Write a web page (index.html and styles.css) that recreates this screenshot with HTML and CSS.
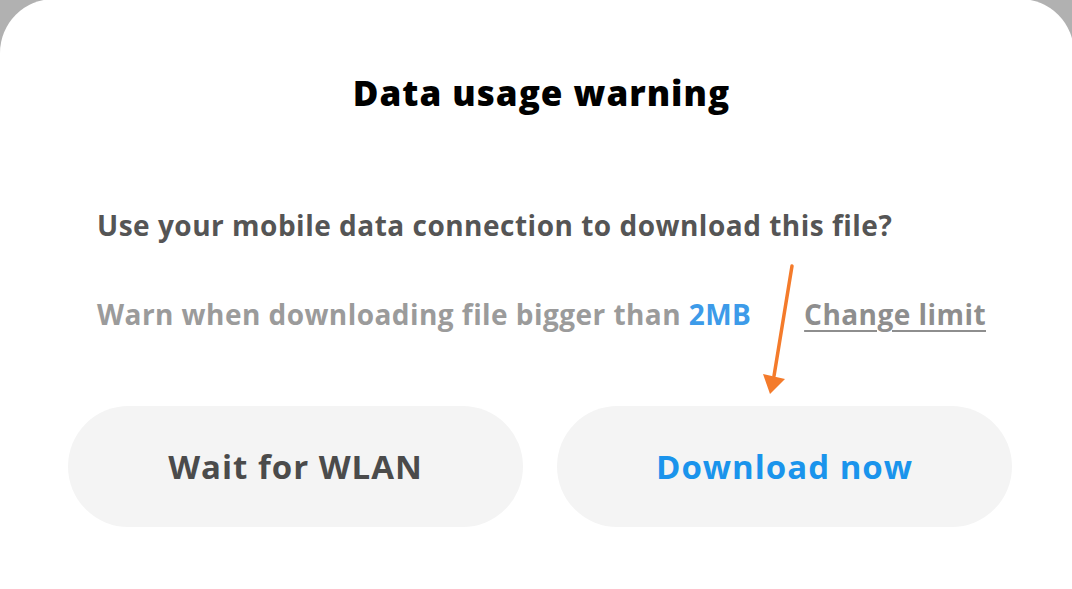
FILE: index.html
```html
<!DOCTYPE html>
<html lang="en">
<head>
<meta charset="utf-8">
<title>Data usage warning</title>
<link rel="stylesheet" href="styles.css">
</head>
<body>
<div class="dialog">
  <h1 class="title">Data usage warning</h1>
  <p class="question">Use your mobile data connection to download this file?</p>
  <div class="limit-row">
    <span class="warn">Warn when downloading file bigger than <span class="size">2MB</span></span>
    <a class="change" href="#">Change limit</a>
  </div>
  <div class="actions">
    <button class="btn btn-wait">Wait for WLAN</button>
    <button class="btn btn-download">Download now</button>
  </div>
  <svg class="arrow" width="40" height="140" viewBox="0 0 40 140">
    <line x1="35" y1="8" x2="17" y2="118" stroke="#f47b2b" stroke-width="3.5" stroke-linecap="round"/>
    <polygon points="6,116 28,121 13,136" fill="#f47b2b"/>
  </svg>
</div>
</body>
</html>
```
FILE: styles.css
```css
html, body {
  margin: 0;
  padding: 0;
  height: 100%;
  overflow: hidden;
}
body {
  background: #b1b1b1;
  font-family: "Open Sans", "Lato", sans-serif;
}
.dialog {
  position: relative;
  box-sizing: border-box;
  margin: -1px -2px 0 0;
  height: 600px;
  background: #ffffff;
  border-radius: 54px 54px 0 0;
  padding: 74px 88px 0 97px;
}
.title {
  margin: 0 0 95px;
  font-size: 35px;
  line-height: 40px;
  font-weight: 800;
  letter-spacing: 1px;
  color: #000;
  text-align: center;
}
.question {
  margin: 0 0 55px;
  font-size: 28px;
  line-height: 34px;
  font-weight: 700;
  letter-spacing: 0.5px;
  color: #555555;
}
.limit-row {
  display: flex;
  justify-content: space-between;
  font-size: 28px;
  line-height: 34px;
  font-weight: 700;
  letter-spacing: 0.45px;
}
.warn {
  color: #9b9b9b;
}
.size {
  color: #3d9be9;
}
.change {
  color: #8e8e8e;
  text-decoration: underline;
  text-decoration-thickness: 2px;
  text-underline-offset: 5px;
}
.actions {
  display: flex;
  gap: 34px;
  margin: 75px 0 0 -29px;
}
.btn {
  flex: 0 0 455px;
  height: 121px;
  border: none;
  border-radius: 61px;
  background: #f4f4f4;
  font-family: inherit;
  font-size: 33px;
  font-weight: 700;
  letter-spacing: 1px;
  padding: 0;
}
.btn-wait {
  color: #4b4b4b;
}
.btn-download {
  color: #1a94ec;
}
.arrow {
  position: absolute;
  left: 757px;
  top: 259px;
}
```
